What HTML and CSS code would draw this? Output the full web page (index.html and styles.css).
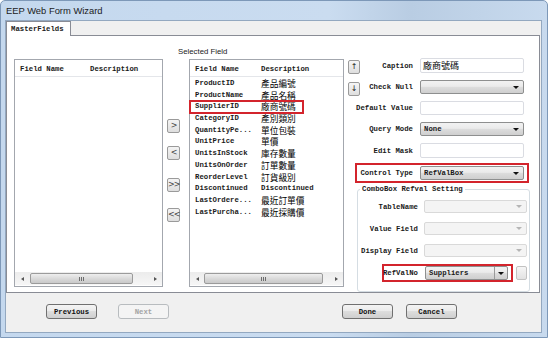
FILE: index.html
```html
<!DOCTYPE html>
<html lang="zh-Hant">
<head>
  <meta charset="UTF-8" />
  <title>EEP Web Form Wizard</title>
  <link rel="stylesheet" href="styles.css">
</head>
<body>

<div class="window">
  <div class="titlebar">EEP Web Form Wizard</div>

  <div class="client">
    <div class="tabs"><div class="tab">MasterFields</div></div>

    <div class="panel">
      <!-- available fields -->
      <div class="list list-left">
        <div class="list-head"><span class="col">Field Name</span><span>Description</span></div>
        <div class="list-body"></div>
        <div class="hscroll">
          <span class="arr"><i class="tri-l"></i></span>
          <span class="track"><span class="thumb"><i class="grip"></i></span></span>
          <span class="arr"><i class="tri-r"></i></span>
        </div>
      </div>

      <div class="movers">
        <button class="mini m1">&gt;</button>
        <button class="mini m2">&lt;</button>
        <button class="mini m3">&gt;&gt;</button>
        <button class="mini m4">&lt;&lt;</button>
      </div>

      <!-- selected fields -->
      <div class="selected">
        <div class="sel-title">Selected Field</div>
        <div class="list list-right">
          <div class="list-head"><span class="col">Field Name</span><span>Description</span></div>
          <div class="list-body">
            <div class="item"><span class="col">ProductID</span><span class="zh">產品編號</span></div>
            <div class="item"><span class="col">ProductName</span><span class="zh">產品名稱</span></div>
            <div class="item picked"><span class="col">SupplierID</span><span class="zh">廠商號碼</span></div>
            <div class="item"><span class="col">CategoryID</span><span class="zh">產別類別</span></div>
            <div class="item"><span class="col">QuantityPe...</span><span class="zh">單位包裝</span></div>
            <div class="item"><span class="col">UnitPrice</span><span class="zh">單價</span></div>
            <div class="item"><span class="col">UnitsInStock</span><span class="zh">庫存數量</span></div>
            <div class="item"><span class="col">UnitsOnOrder</span><span class="zh">訂單數量</span></div>
            <div class="item"><span class="col">ReorderLevel</span><span class="zh">訂貨級別</span></div>
            <div class="item"><span class="col">Discontinued</span><span>Discontinued</span></div>
            <div class="item"><span class="col">LastOrdere...</span><span class="zh">最近訂單價</span></div>
            <div class="item"><span class="col">LastPurcha...</span><span class="zh">最近採購價</span></div>
          </div>
          <div class="hscroll">
            <span class="arr"><i class="tri-l"></i></span>
            <span class="track"><span class="thumb"><i class="grip"></i></span></span>
            <span class="arr"><i class="tri-r"></i></span>
          </div>
        </div>
      </div>

      <!-- field properties -->
      <div class="props">
        <div class="row tall">
          <div class="lbl split"><button class="updown">&#8593;</button><span>Caption</span></div>
          <div class="text"><span class="zh-in">廠商號碼</span></div>
        </div>
        <div class="row">
          <div class="lbl split"><button class="updown">&#8595;</button><span>Check Null</span></div>
          <div class="combo"><span class="val"></span><i class="dd"></i></div>
        </div>
        <div class="row">
          <div class="lbl">Default Value</div>
          <div class="text"></div>
        </div>
        <div class="row">
          <div class="lbl">Query Mode</div>
          <div class="combo"><span class="val">None</span><i class="dd"></i></div>
        </div>
        <div class="row tall">
          <div class="lbl">Edit Mask</div>
          <div class="text"></div>
        </div>
        <div class="row mark mark-type">
          <div class="lbl">Control Type</div>
          <div class="combo"><span class="val">RefValBox</span><i class="dd"></i></div>
        </div>

        <fieldset class="group">
          <legend>ComboBox Refval Setting</legend>
          <div class="grow">
            <div class="lbl">TableName</div>
            <div class="combo off"><span class="val"></span><i class="dd"></i></div>
          </div>
          <div class="grow">
            <div class="lbl">Value Field</div>
            <div class="combo off"><span class="val"></span><i class="dd"></i></div>
          </div>
          <div class="grow">
            <div class="lbl">Display Field</div>
            <div class="combo off"><span class="val"></span><i class="dd"></i></div>
          </div>
          <div class="grow last">
            <div class="mark mark-ref">
              <div class="lbl">RefValNo</div>
              <div class="combo drop"><span class="val">Suppliers</span><span class="btn-dd"><i class="dd"></i></span></div>
            </div>
            <button class="dots"></button>
          </div>
        </fieldset>
      </div>
    </div>

    <div class="footer">
      <button class="btn">Previous</button>
      <button class="btn next" disabled>Next</button>
      <button class="btn done">Done</button>
      <button class="btn cancel">Cancel</button>
    </div>
  </div>
</div>

</body>
</html>
```

FILE: styles.css
```css
body {
  margin: 0;
  font-family: "Liberation Mono", monospace;
  font-size: 7.3px;
  font-weight: bold;
  color: #1a1a1a;
}
button {
  font-family: inherit;
  font-size: inherit;
  font-weight: inherit;
  color: inherit;
  padding: 0;
  margin: 0;
}
.zh, .zh-in {
  font-family: "Noto Sans CJK TC", sans-serif;
  font-size: 8.7px;
  font-weight: normal;
  color: #000;
}
.zh-in {
  font-size: 9px;
}

/* window frame */
.window {
  width: 548px;
  height: 338px;
  box-sizing: border-box;
  display: flex;
  flex-direction: column;
  padding: 0 5px 4px 4px;
  border: 1px solid #7d98b8;
  border-radius: 5px 5px 0 0;
  background: linear-gradient(90deg, #c4d8ee 0%, #cadcf0 60%, #b9cde3 75%, #c8daee 100%);
}
.titlebar {
  height: 19px;
  line-height: 19px;
  padding-left: 1px;
  font-family: "Liberation Sans", sans-serif;
  font-size: 9.4px;
  font-weight: normal;
  color: #1b1b1b;
}
.client {
  flex: 1;
  display: flex;
  flex-direction: column;
  background: #f0f0f0;
  border: 1px solid #93a8c0;
}

/* tab */
.tabs {
  height: 14px;
  display: flex;
}
.tab {
  position: relative;
  z-index: 1;
  height: 15px;
  box-sizing: border-box;
  padding: 3px 6px 0 4px;
  background: #fff;
  border: 1px solid #898c95;
  border-bottom: none;
}
.panel {
  height: 258px;
  box-sizing: border-box;
  margin-right: 1px;
  padding-left: 7px;
  display: flex;
  align-items: flex-start;
  background: #fff;
  border: 1px solid #898c95;
}

/* list views */
.list {
  height: 228px;
  box-sizing: border-box;
  display: flex;
  flex-direction: column;
  border: 1px solid #a3a7ae;
  background: #fff;
}
.list-left {
  width: 149px;
  margin-top: 23px;
}
.list-right {
  width: 155px;
}
.list-head {
  height: 16px;
  line-height: 18px;
  padding-left: 5px;
  display: flex;
  border-bottom: 1px solid #e4e6ea;
  white-space: nowrap;
}
.list-left .col {
  width: 70px;
}
.list-right .col {
  width: 66px;
}
.list-body {
  flex: 1;
  padding-top: 1px;
}
.item {
  height: 11.7px;
  line-height: 11.7px;
  padding-left: 5px;
  display: flex;
  white-space: nowrap;
}
.item.picked {
  width: 108px;
  outline: 2px solid #d3242c;
  outline-offset: -1px;
}

.hscroll {
  height: 13px;
  display: flex;
  align-items: center;
  background: linear-gradient(#ececec, #f6f6f6);
  margin-bottom: 1px;
}
.arr {
  width: 14px;
  display: flex;
  justify-content: center;
}
.tri-l, .tri-r {
  width: 0;
  height: 0;
  border-top: 2px solid transparent;
  border-bottom: 2px solid transparent;
}
.tri-l { border-right: 3px solid #555; }
.tri-r { border-left: 3px solid #555; }
.track {
  flex: 1;
  height: 13px;
  display: flex;
  align-items: center;
}
.thumb {
  height: 11px;
  box-sizing: border-box;
  display: flex;
  justify-content: center;
  align-items: center;
  border: 1px solid #9b9b9b;
  border-radius: 2px;
  background: linear-gradient(#eeeeee, #d8d8d8 55%, #cacaca);
}
.list-left .thumb { width: 103px; margin-left: 1px; }
.list-right .thumb { width: 119px; }
.grip {
  width: 5px;
  height: 4px;
  background: repeating-linear-gradient(90deg, #6d6d6d 0 1px, transparent 1px 2px);
}

/* move buttons */
.movers {
  width: 13px;
  margin-left: 4px;
  display: flex;
  flex-direction: column;
}
.mini {
  width: 13px;
  height: 14px;
  font-family: "DejaVu Sans", sans-serif;
  font-size: 8px;
  font-weight: normal;
  line-height: 12px;
  letter-spacing: -1px;
  color: #444;
  border: 1px solid #9a9a9a;
  border-radius: 2px;
  background: linear-gradient(#f4f4f4, #dedede);
}
.m1 { margin-top: 83px; }
.m2 { margin-top: 13px; }
.m3 { margin-top: 18px; }
.m4 { margin-top: 16px; }

.selected {
  margin-left: 9px;
}
.sel-title {
  margin: 11px 0 2px -11px;
  height: 10px;
  line-height: 10px;
  font-family: "Liberation Sans", sans-serif;
  font-size: 7.8px;
  font-weight: normal;
  color: #222;
}

/* properties */
.props {
  width: 182px;
  margin: 22px 0 0 4px;
  display: flex;
  flex-direction: column;
  gap: 7px;
}
.row {
  height: 14px;
  display: flex;
  align-items: center;
  gap: 7px;
  white-space: nowrap;
}
.row.tall {
  height: 15px;
}
.lbl {
  width: 65px;
  flex-shrink: 0;
  display: flex;
  justify-content: flex-end;
  align-items: center;
  white-space: nowrap;
}
.lbl.split {
  justify-content: space-between;
  align-self: flex-start;
  height: 100%;
}
.updown {
  width: 12px;
  height: 14px;
  margin-top: 3px;
  font-family: "DejaVu Sans", sans-serif;
  font-size: 8px;
  font-weight: normal;
  line-height: 12px;
  border: 1px solid #9a9a9a;
  border-radius: 2px;
  background: linear-gradient(#f6f6f6, #dedede);
}
.text {
  width: 104px;
  height: 100%;
  box-sizing: border-box;
  padding-left: 2px;
  display: flex;
  align-items: center;
  background: #fff;
  border: 1px solid #dadce2;
  border-radius: 2px;
}
.combo {
  width: 104px;
  height: 14px;
  box-sizing: border-box;
  padding: 0 4px 0 3px;
  display: flex;
  align-items: center;
  border: 1px solid #8e8f8f;
  border-radius: 2px;
  background: linear-gradient(#f2f2f2, #ebebeb 45%, #dddddd 50%, #cfcfcf);
}
.val {
  flex: 1;
}
.dd {
  width: 0;
  height: 0;
  border-left: 3px solid transparent;
  border-right: 3px solid transparent;
  border-top: 3px solid #111;
}
.mark {
  border: 2px solid #d3242c;
}
.mark-type {
  width: 174px;
  height: 20px;
  box-sizing: border-box;
  margin: -2px 0 0 7px;
}
.mark-type .lbl {
  width: 56px;
}

/* ComboBox Refval group */
.group {
  width: 173px;
  box-sizing: border-box;
  margin: -6px 0 0 9px;
  padding: 0 2px 9px 0;
  display: flex;
  flex-direction: column;
  gap: 9px;
  border: 1px solid #d5dde3;
  border-radius: 3px;
  min-width: 0;
}
.group legend {
  margin-left: 2px;
  padding: 0 2px;
  line-height: 10px;
}
.grow {
  height: 13px;
  display: flex;
  align-items: center;
  gap: 6px;
  white-space: nowrap;
}
.grow:first-of-type {
  margin-top: 6px;
}
.grow .lbl {
  width: 60px;
}
.combo.off {
  width: 103px;
  height: 13px;
  border-color: #d9d9d9;
  background: #f4f4f4;
}
.combo.off .dd {
  border-top-color: #b5b5b5;
}
.grow.last {
  gap: 3px;
  margin-top: -2px;
  height: 18px;
}
.mark-ref {
  width: 131px;
  height: 18px;
  box-sizing: border-box;
  margin-left: 24px;
  display: flex;
  align-items: center;
  gap: 7px;
}
.mark-ref .lbl {
  width: 34px;
}
.combo.drop {
  width: 83px;
  padding-right: 0;
}
.btn-dd {
  width: 12px;
  height: 100%;
  display: flex;
  justify-content: center;
  align-items: center;
  border-left: 1px solid #9a9a9a;
}
.dots {
  width: 11px;
  height: 14px;
  border: 1px solid #c2c2c2;
  border-radius: 2px;
  background: linear-gradient(#f6f6f6, #e2e2e2);
}

/* bottom buttons */
.footer {
  flex: 1;
  display: flex;
  align-items: flex-start;
  padding: 11px 84px 0 40px;
}
.btn {
  width: 51px;
  height: 15px;
  border: 1px solid #707070;
  border-radius: 3px;
  background: linear-gradient(#f4f4f4, #ebebeb 45%, #dddddd 50%, #cfcfcf);
  color: #111;
}
.btn.next {
  margin-left: 21px;
  border-color: #b8bcbf;
  background: #f4f4f4;
  color: #a4a4a4;
}
.btn.done {
  margin-left: auto;
}
.btn.cancel {
  margin-left: 13px;
}
```
